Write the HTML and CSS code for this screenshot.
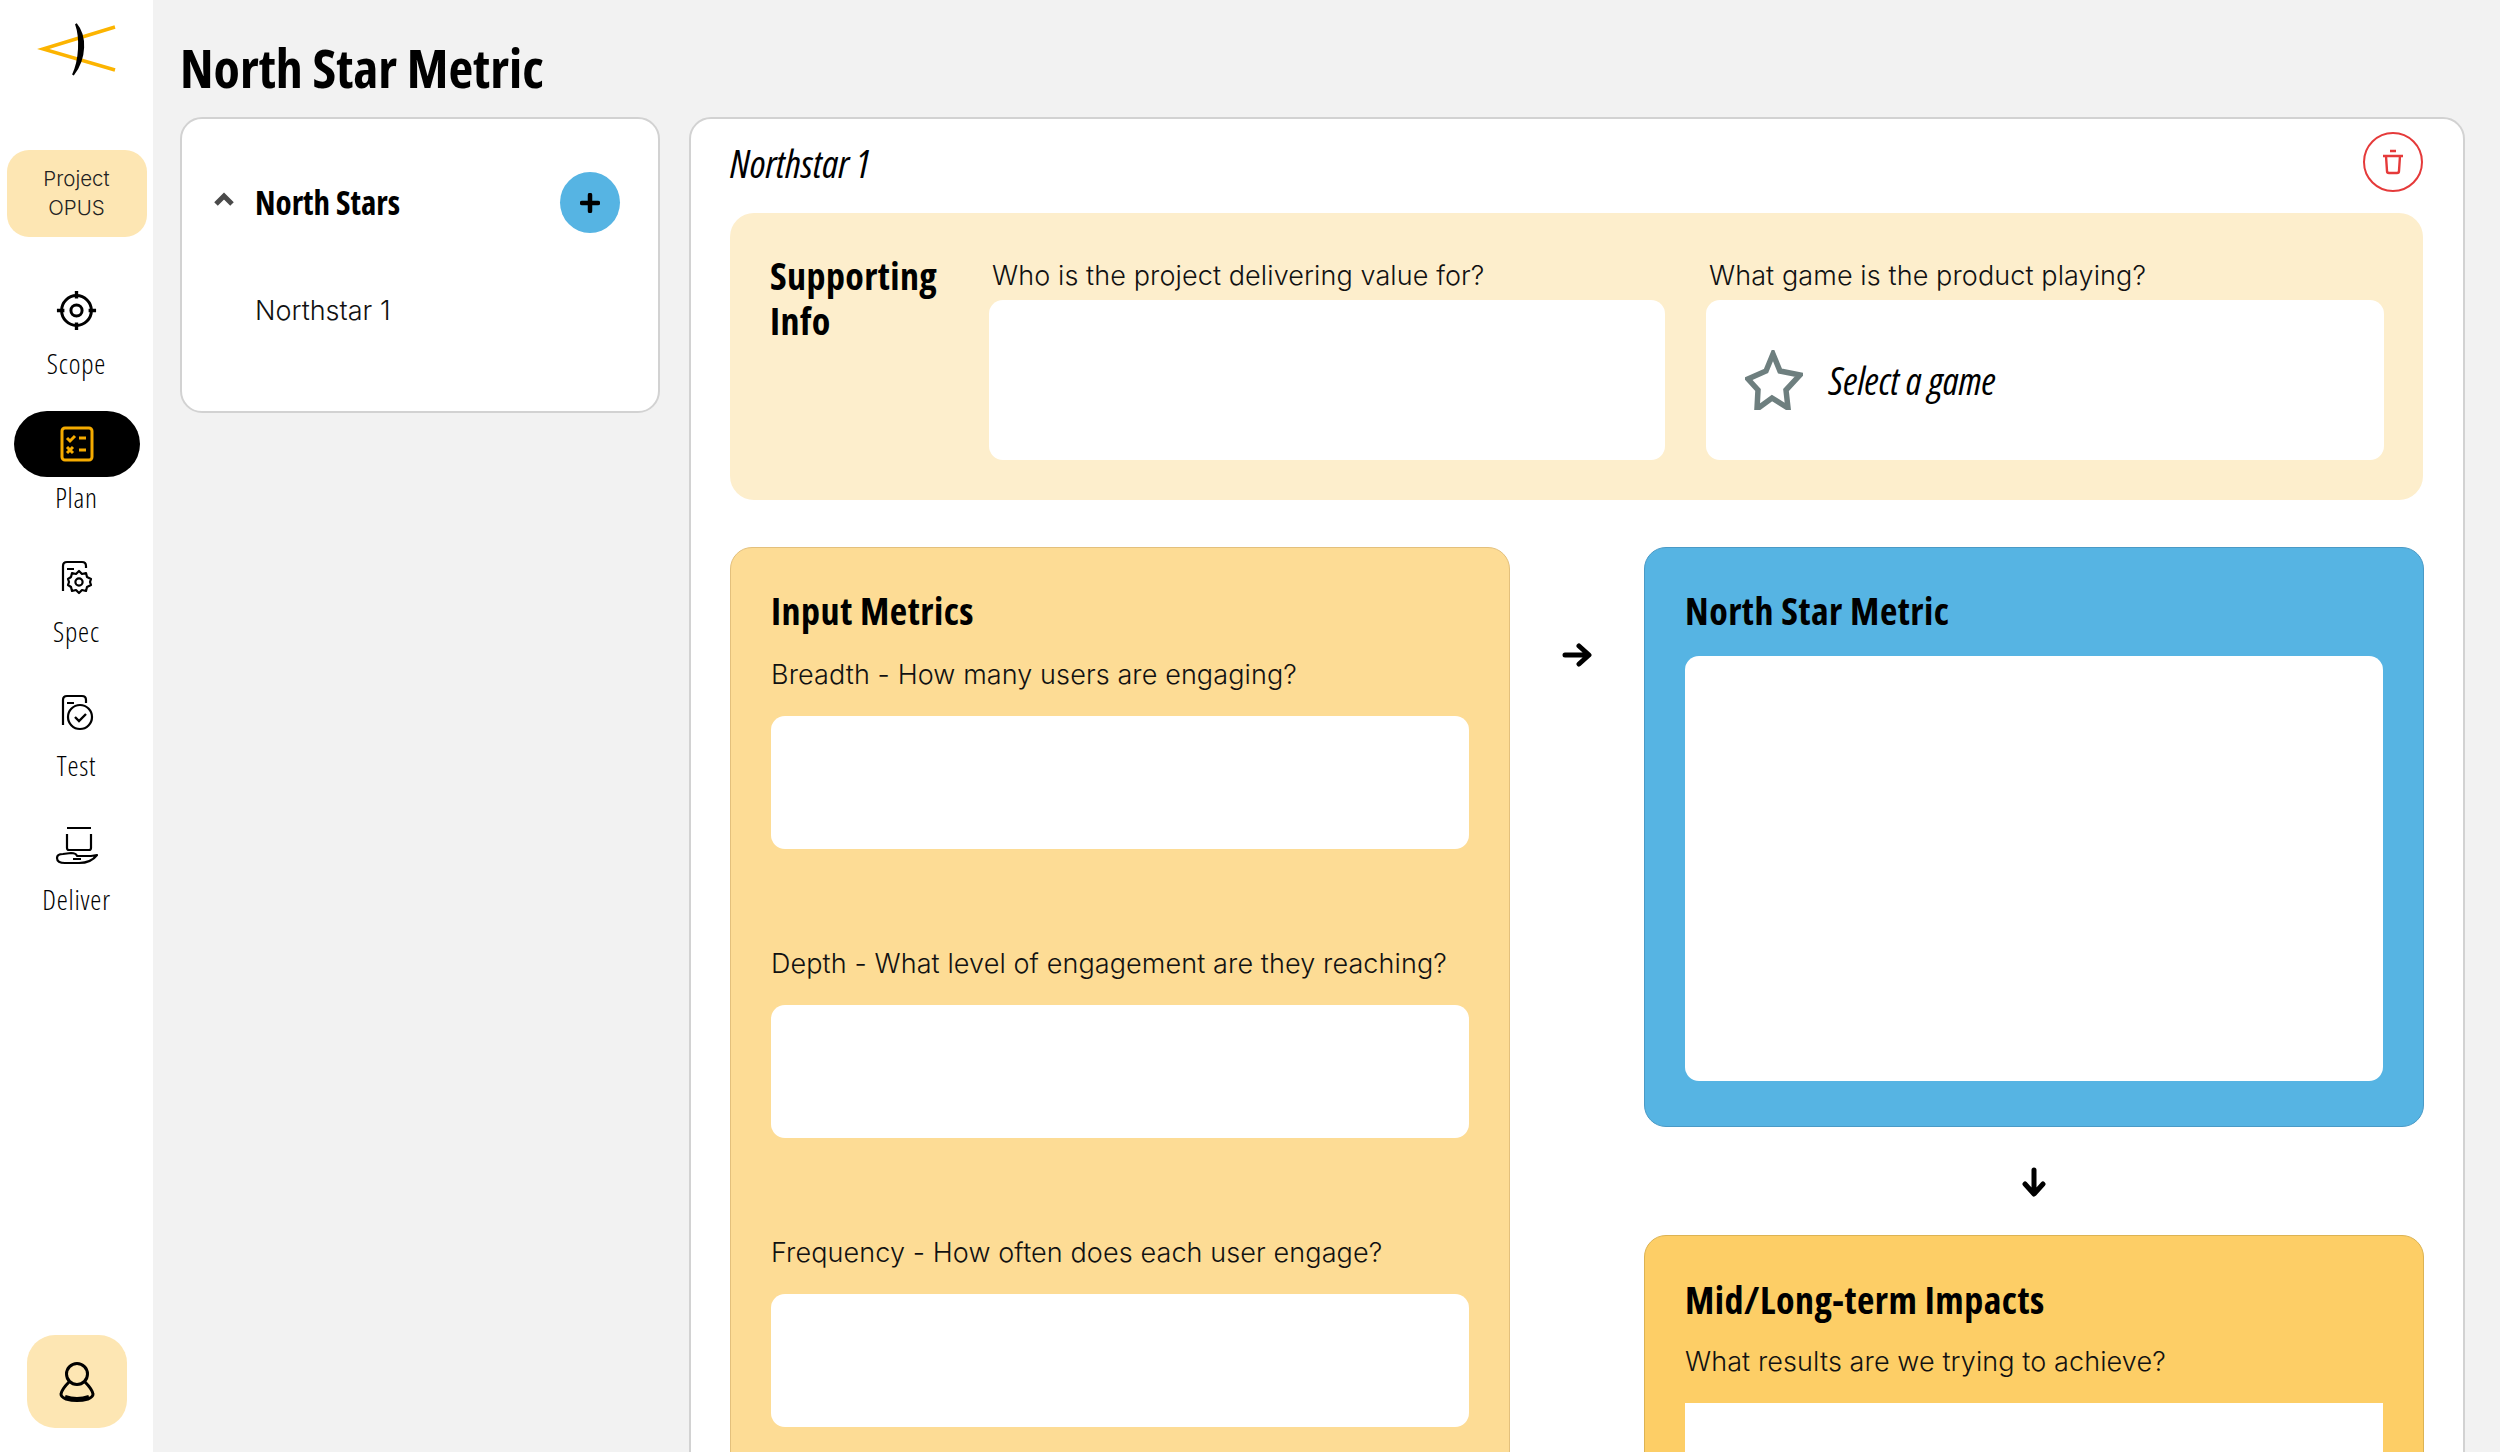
FILE: index.html
```html
<!DOCTYPE html>
<html lang="en">
<head>
<meta charset="utf-8">
<title>North Star Metric</title>
<link rel="stylesheet" href="styles.css">
</head>
<body>
<div class="app">
  <nav class="sidebar">
    <svg class="logo" viewBox="0 0 153 90" width="153" height="90">
      <path d="M115 27 L43 49 L115 70" fill="none" stroke="#fcb400" stroke-width="3.4"/>
      <path d="M76 24 C86 36 86 58 73 75 C80 60 81 38 76 24Z" fill="#000" stroke="#000" stroke-width="2"/>
    </svg>
    <div class="project">Project<br>OPUS</div>
    <a class="nav-item first">
      <span class="nav-icon">
        <svg viewBox="0 0 44 44" width="41" height="41" fill="none" stroke="#000" stroke-width="3.200"><circle cx="22" cy="22" r="16"/><circle cx="22" cy="22" r="6"/><path d="M22 1v8M22 35v8M1 22h8M35 22h8" stroke-width="3.600"/></svg>
      </span>
      <span class="nav-label">Scope</span>
    </a>
    <a class="nav-item">
      <span class="nav-icon active">
        <svg viewBox="0 0 36 38" width="36" height="38" fill="none" stroke="#f5ab00" stroke-width="3"><rect x="3" y="3" width="30" height="32" rx="3"/><path d="M8 13l3 3 5-5M20 13h7M8 22l6 6M14 22l-6 6M20 25h7"/></svg>
      </span>
      <span class="nav-label">Plan</span>
    </a>
    <a class="nav-item">
      <span class="nav-icon">
        <svg viewBox="0 0 36 38" width="36" height="38" fill="none" stroke="#000" stroke-width="2.200"><path d="M4 32V7q0-4 4-4h15q4 0 4 4v2M8 10h7"/><circle cx="20" cy="23" r="3.6"/><path d="M20 12l3 3 4-1 1 4 4 2-1 3 1 3-4 2-1 4-4-1-3 3-3-3-4 1-1-4-3-2 1-3-1-3 3-2 1-4 4 1z" stroke-linejoin="round"/></svg>
      </span>
      <span class="nav-label">Spec</span>
    </a>
    <a class="nav-item">
      <span class="nav-icon">
        <svg viewBox="0 0 36 38" width="36" height="38" fill="none" stroke="#000" stroke-width="2.200"><path d="M4 32V7q0-4 4-4h15q4 0 4 4v3M8 10h7"/><circle cx="21" cy="24" r="12"/><path d="M16 24l4 4 7-7" stroke-width="2.4"/></svg>
      </span>
      <span class="nav-label">Test</span>
    </a>
    <a class="nav-item">
      <span class="nav-icon">
        <svg viewBox="0 0 44 40" width="44" height="40" fill="none" stroke="#000" stroke-width="2.200"><path d="M12 2h24M12 8v14q0 2 2 2h20q2 0 2-2V8"/><path d="M2 32q0-4 6-4l8-1q5 0 6 3h14l6-1q-6 8-18 8H10Q2 37 2 32ZM18 33h8" stroke-linejoin="round"/></svg>
      </span>
      <span class="nav-label">Deliver</span>
    </a>
    <button class="user">
      <svg viewBox="0 0 36 42" width="36" height="42" fill="none" stroke="#000" stroke-width="3"><circle cx="18" cy="13" r="10.500"/><path d="M10 21Q3 28 2 33q0 3 5 5 11 3 22 0 5-2 5-5-1-5-8-12"/><path d="M6 36q12 4 24 0" stroke-width="4"/></svg>
    </button>
  </nav>

  <main class="content">
    <h1 class="page-title">North Star Metric</h1>
    <div class="panels">
      <aside class="list-card">
        <div class="list-head">
          <svg class="chevron" viewBox="0 0 20 14" width="20" height="14" fill="none" stroke="#4a4a4a" stroke-width="5"><path d="M2 12l8-8 8 8"/></svg>
          <span class="list-title">North Stars</span>
          <button class="add"><svg viewBox="0 0 20 20" width="20" height="20" stroke="#000" stroke-width="4.500" stroke-linecap="round"><path d="M10 2v16M2 10h16"/></svg></button>
        </div>
        <div class="list-item">Northstar 1</div>
      </aside>

      <section class="detail">
        <header class="detail-head">
          <span class="script name">Northstar 1</span>
          <button class="delete">
            <svg viewBox="0 0 24 26" width="24" height="26" fill="none" stroke="#e53a3a" stroke-width="2.400"><path d="M9 2h6M2 7h20M5 7l1 15q0 2 2 2h8q2 0 2-2l1-15"/></svg>
          </button>
        </header>

        <div class="supporting">
          <h2 class="h-sup">Supporting Info</h2>
          <div class="field">
            <label class="label lab-a">Who is the project delivering value for?</label>
            <div class="box box-sup"></div>
          </div>
          <div class="field">
            <label class="label lab-a">What game is the product playing?</label>
            <div class="box box-sup game">
              <svg viewBox="0 0 58 60" width="58" height="60" fill="none" stroke="#6e7f7f" stroke-width="5.500" stroke-linejoin="miter"><path d="M28 4l7 17 20 4-14 15 2 18-16-10-15 11 1-19L3 29l18-8z"/></svg>
              <span class="script select">Select a game</span>
            </div>
          </div>
        </div>

        <div class="flow">
          <div class="tile input-metrics">
            <h2 class="tile-title">Input Metrics</h2>
            <label class="label tile-label">Breadth - How many users are engaging?</label>
            <div class="box box-in"></div>
            <label class="label tile-label later">Depth - What level of engagement are they reaching?</label>
            <div class="box box-in"></div>
            <label class="label tile-label later">Frequency - How often does each user engage?</label>
            <div class="box box-in"></div>
          </div>

          <div class="arrow-right">
            <svg viewBox="0 0 30 24" width="30" height="24" fill="none" stroke="#000" stroke-width="5" stroke-linecap="round" stroke-linejoin="round"><path d="M3 12h23M17 3l10 9-10 9"/></svg>
          </div>

          <div class="right-col">
            <div class="tile nsm">
              <h2 class="tile-title">North Star Metric</h2>
              <div class="box box-nsm"></div>
            </div>
            <div class="arrow-down">
              <svg viewBox="0 0 24 30" width="24" height="30" fill="none" stroke="#000" stroke-width="5" stroke-linecap="round" stroke-linejoin="round"><path d="M12 3v23M3 17l9 10 9-10"/></svg>
            </div>
            <div class="tile impacts">
              <h2 class="tile-title">Mid/Long-term Impacts</h2>
              <label class="label tile-label">What results are we trying to achieve?</label>
              <div class="box box-imp"></div>
            </div>
          </div>
        </div>
      </section>
    </div>
  </main>
</div>
</body>
</html>
```
FILE: styles.css
```css
* { box-sizing: border-box; }
html, body { margin: 0; height: 1452px; overflow: hidden; }
body {
  background: #f2f2f2;
  color: #000;
  font-family: "Inter", "Liberation Sans", sans-serif;
}
h1, h2 { margin: 0; }
button { border: 0; padding: 0; cursor: pointer; }
label { display: block; }

.app { display: flex; height: 1452px; }

/* sidebar */
.sidebar {
  width: 153px;
  flex: none;
  background: #fff;
  display: flex;
  flex-direction: column;
  align-items: center;
  height: 100%;
}
.logo { display: block; margin-bottom: 60px; }
.project {
  width: 140px;
  height: 87px;
  padding-bottom: 2px;
  background: #fde6b3;
  border-radius: 22px;
  display: flex;
  align-items: center;
  justify-content: center;
  text-align: center;
  font-size: 20.500px;
  font-weight: 300;
  line-height: 29px;
  color: #222;
}
.nav-item { display: flex; flex-direction: column; align-items: center; height: 134px; }
.nav-item.first { margin-top: 40px; }
.nav-icon { display: flex; align-items: center; justify-content: center; width: 126px; height: 66px; }
.nav-icon.active { background: #000; border-radius: 33px; }
.nav-label {
  font-family: "Open Sans", sans-serif;
  font-stretch: 75%;
  font-size: 28px;
  font-weight: 300;
  letter-spacing: 0.8px;
  line-height: 34px;
  margin-top: 3px;
}
.user {
  margin-top: auto;
  margin-bottom: 24px;
  width: 100px;
  height: 93px;
  background: #fde6b3;
  border-radius: 28px;
  display: flex;
  align-items: center;
  justify-content: center;
}

/* content */
.content { flex: 1; min-width: 0; padding: 0 35px 0 27px; }
.page-title {
  font-family: "Open Sans", sans-serif;
  font-stretch: 75%;
  font-size: 54px;
  font-weight: 700;
  height: 117px;
  line-height: 134px;
}
.panels { display: flex; gap: 29px; align-items: flex-start; }

.list-card {
  width: 480px;
  height: 296px;
  flex: none;
  background: #fff;
  border: 2px solid #d2d2d2;
  border-radius: 22px;
  padding: 53px 38px 0 32px;
}
.list-head { display: flex; align-items: center; height: 61px; }
.chevron { margin-right: 21px; margin-top: -8px; }
.list-title {
  font-family: "Open Sans", sans-serif;
  font-stretch: 75%;
  font-size: 33px;
  font-weight: 700;
}
.add {
  margin-left: auto;
  width: 60px;
  height: 61px;
  border-radius: 50%;
  background: #56b4e3;
  display: flex;
  align-items: center;
  justify-content: center;
}
.list-item { margin: 61px 0 0 41px; font-size: 27px; font-weight: 300; line-height: 34px; color: #111; }

.detail {
  flex: 1;
  min-width: 0;
  height: 1400px;
  background: #fff;
  border: 2px solid #d2d2d2;
  border-radius: 22px;
  padding: 13px 40px 0 39px;
}
.detail-head { display: flex; align-items: center; justify-content: space-between; height: 60px; margin-bottom: 21px; }
.script {
  font-family: "Open Sans", sans-serif;
  font-stretch: 75%;
  font-style: italic;
}
.name { font-size: 39px; font-weight: 400; }
.delete {
  width: 60px;
  height: 60px;
  border-radius: 50%;
  background: #fff;
  border: 2px solid #e53a3a;
  display: flex;
  align-items: center;
  justify-content: center;
}

.supporting {
  display: grid;
  grid-template-columns: 178px 676px 678px;
  column-gap: 41px;
  height: 287px;
  background: #fdeecc;
  border-radius: 24px;
  padding: 40px 39px 0 40px;
}
.h-sup {
  font-family: "Open Sans", sans-serif;
  font-stretch: 75%;
  font-size: 38px;
  font-weight: 700;
  line-height: 45px;
  letter-spacing: 0.4px;
  width: 180px;
}
.label { font-size: 27px; font-weight: 300; line-height: 47px; color: #111; letter-spacing: 0.1px; }
.lab-a { padding-left: 3px; height: 47px; margin-top: -1px; margin-bottom: 1px; }
.box { background: #fff; border-radius: 14px; }
.box-sup { height: 160px; }
.game { display: flex; align-items: center; padding-left: 39px; gap: 26px; }
.select { font-size: 38px; font-weight: 500; }

.flow { display: grid; grid-template-columns: 780px 134px 780px; margin-top: 47px; }
.tile { border-radius: 22px; padding: 0 40px; }
.tile-title {
  font-family: "Open Sans", sans-serif;
  font-stretch: 75%;
  font-size: 38px;
  font-weight: 700;
  line-height: 46px;
  letter-spacing: 0.5px;
}
.tile-label { height: 47px; }
.input-metrics {
  height: 1000px;
  background: #fddc95;
  border: 1.500px solid #e3c07c;
  padding-top: 39px;
}
.input-metrics .tile-title { margin-bottom: 18px; }
.input-metrics .tile-label { margin-bottom: 18px; }
.box-in { height: 133px; }
.later { margin-top: 91px; }

.arrow-right { display: flex; justify-content: center; padding-top: 96px; }
.arrow-right svg { display: block; }

.nsm {
  height: 580px;
  background: #56b4e3;
  border: 1.500px solid #4a9ac6;
  padding-top: 39px;
}
.nsm .tile-title { margin-bottom: 23px; }
.box-nsm { height: 425px; }
.arrow-down { height: 108px; padding-top: 2px; display: flex; align-items: center; justify-content: center; }
.impacts {
  height: 400px;
  background: #fdce66;
  border: 1.500px solid #dcb353;
  padding-top: 40px;
}
.impacts .tile-title { margin-bottom: 16px; }
.impacts .tile-label { margin-bottom: 18px; }
.box-imp { height: 200px; border-radius: 0; }
```
